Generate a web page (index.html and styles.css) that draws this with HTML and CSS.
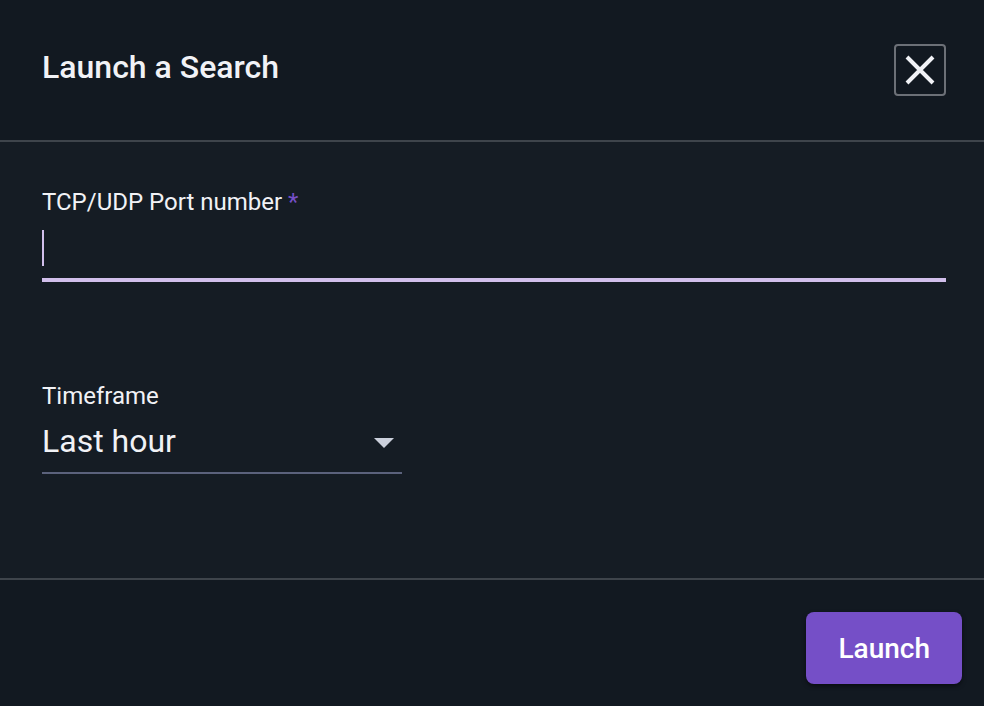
FILE: index.html
```html
<!DOCTYPE html>
<html lang="en">
<head>
<meta charset="utf-8">
<meta name="viewport" content="width=device-width, initial-scale=1">
<title>Launch a Search</title>
<link rel="stylesheet" href="styles.css">
</head>
<body>
<form class="dialog">
  <header class="dialog-header">
    <h1 class="dialog-title">Launch a Search</h1>
    <button class="close-button" type="button" aria-label="Close">
      <svg class="close-icon" viewBox="0 0 32 32" aria-hidden="true"><path d="M3 3 29 29M29 3 3 29"/></svg>
    </button>
  </header>
  <main class="dialog-body">
    <div class="field">
      <label class="field-label" for="port">TCP/UDP Port number <span class="required">*</span></label>
      <div class="text-control">
        <input class="text-input" id="port" type="text" required>
      </div>
    </div>
    <div class="field field-short">
      <label class="field-label" for="timeframe">Timeframe</label>
      <div class="select-control">
        <select class="select-input" id="timeframe">
          <option selected>Last hour</option>
        </select>
        <svg class="select-arrow" viewBox="0 0 20 10" aria-hidden="true"><path d="M0 0h20L10 10z"/></svg>
      </div>
    </div>
  </main>
  <footer class="dialog-footer">
    <button class="launch-button" type="submit">Launch</button>
  </footer>
</form>
</body>
</html>
```
FILE: styles.css
```css
* {
  box-sizing: border-box;
}

body {
  margin: 0;
  background: #121921;
  color: #f1f2f6;
  font-family: Roboto, "Liberation Sans", sans-serif;
}

button,
input,
select {
  margin: 0;
  font-family: inherit;
  color: inherit;
}

.dialog {
  display: flex;
  flex-direction: column;
  min-height: 100vh;
}

.dialog-header {
  display: flex;
  align-items: flex-start;
  justify-content: space-between;
  padding: 44px 38px 44px 42px;
  border-bottom: 2px solid #3e444b;
}

.dialog-title {
  margin: 0;
  font-size: 32px;
  line-height: 46px;
  font-weight: 500;
}

.close-button {
  display: flex;
  align-items: center;
  justify-content: center;
  width: 52px;
  height: 52px;
  padding: 0;
  background: none;
  border: 2px solid #6c7077;
  border-radius: 4px;
}

.close-icon {
  width: 32px;
  height: 32px;
  fill: none;
  stroke: #f1f2f6;
  stroke-width: 4;
}

.dialog-body {
  display: flex;
  flex: 1;
  flex-direction: column;
  gap: 98px;
  padding: 44px 38px 44px 42px;
  background: #151c24;
}

.field {
  display: flex;
  flex-direction: column;
}

.field-short {
  width: 360px;
}

.field-label {
  font-size: 24px;
  line-height: 32px;
}

.required {
  color: #754fc7;
}

.text-control,
.select-control {
  position: relative;
}

.text-input,
.select-input {
  display: block;
  width: 100%;
  padding: 0;
  background: transparent;
  border: 0;
  border-radius: 0;
  outline: 0;
  font-size: 32px;
}

.text-input {
  height: 64px;
  border-bottom: 4px solid #d1bfeb;
  caret-color: #d1bfeb;
}

/* Insertion bar of the active field */
.text-control::before {
  content: "";
  position: absolute;
  top: 12px;
  left: 0;
  width: 2px;
  height: 36px;
  background: #d1bfeb;
}

.select-input {
  height: 62px;
  padding-bottom: 2px;
  appearance: none;
  border-bottom: 2px solid #5b627c;
}

.select-arrow {
  position: absolute;
  top: 26px;
  right: 8px;
  width: 20px;
  height: 10px;
  fill: #cbd0dc;
  pointer-events: none;
}

.dialog-footer {
  display: flex;
  justify-content: flex-end;
  padding: 32px 22px 22px;
  border-top: 2px solid #3e444b;
}

.launch-button {
  height: 72px;
  padding: 0 32px;
  background: #754fc7;
  border: 0;
  border-radius: 8px;
  box-shadow: 0 2px 4px rgba(0, 0, 0, 0.5);
  color: #fff;
  font-size: 28px;
  font-weight: 500;
}
```
